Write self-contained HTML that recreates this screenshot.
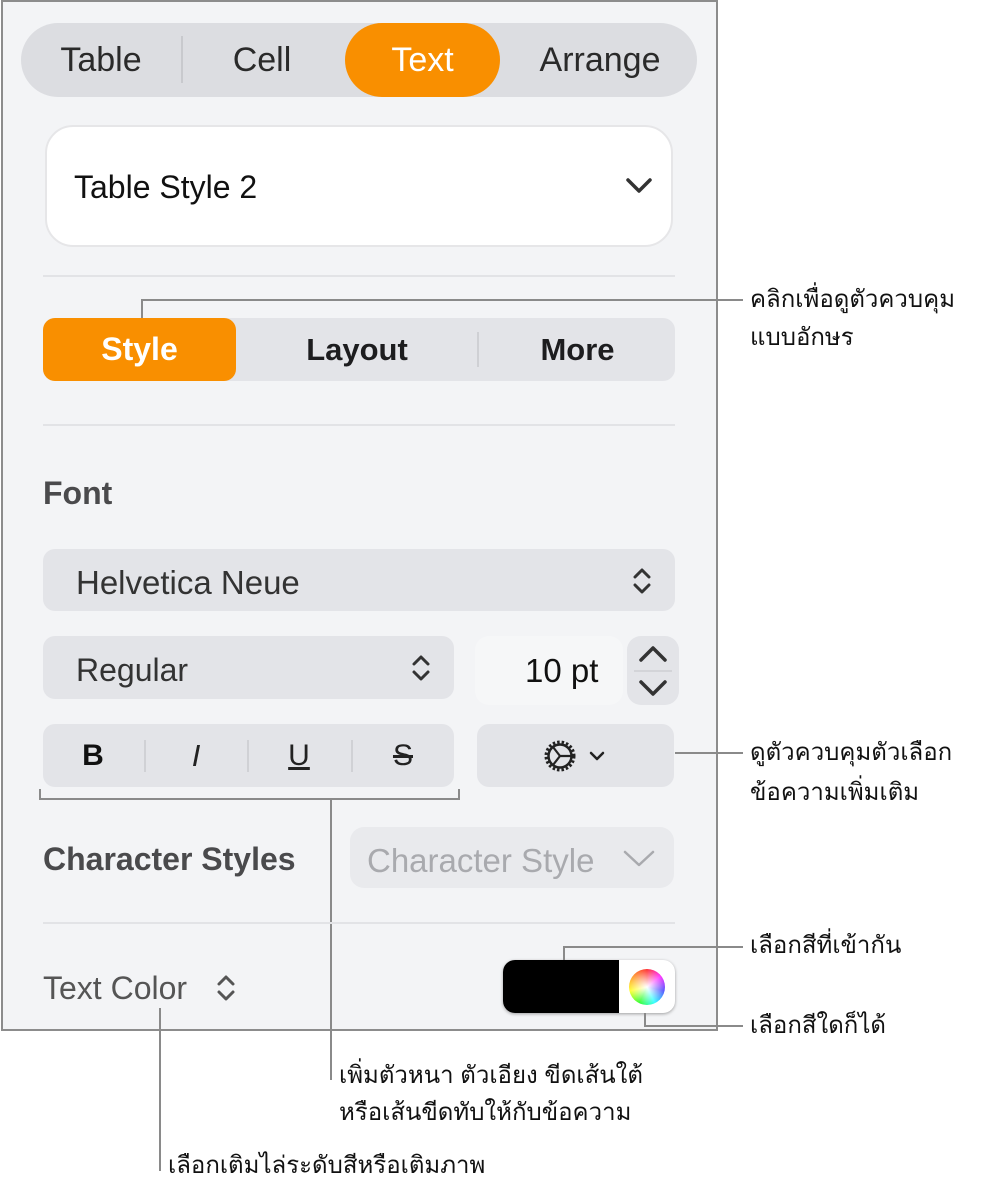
<!DOCTYPE html>
<html><head><meta charset="utf-8"><style>
*{margin:0;padding:0;box-sizing:border-box}
body{width:984px;height:1181px;background:#fff;position:relative;overflow:hidden;font-family:"Liberation Sans","Noto Sans CJK SC",sans-serif;color:#1d1d1f}
.a{position:absolute}
.panel{left:1px;top:0;width:717px;height:1031px;background:#f3f4f6;border:2px solid #8c8c8c}
.ctl{background:#e3e4e8;border-radius:12px}
.ln{background:#8a8a8a;position:absolute}
.th{font-family:"Liberation Sans","Noto Sans CJK SC","WenQuanYi Zen Hei",sans-serif;font-size:24px;color:#111;line-height:38px;white-space:nowrap}
.div{height:2px;background:#e2e3e6}
.c{display:flex;align-items:center;justify-content:center}
.t{line-height:1;white-space:nowrap}
</style></head><body>
<div class="a panel"></div>
<!-- tabs -->
<div class="a" style="left:21px;top:23px;width:676px;height:74px;background:#dcdde1;border-radius:37px"></div>
<div class="a" style="left:181px;top:36px;width:2px;height:47px;background:#c8c9cd"></div>
<div class="a" style="left:345px;top:23px;width:155px;height:74px;background:#f98f00;border-radius:37px"></div>
<div class="a c" style="left:40px;top:23px;width:122px;height:74px;font-size:34px;color:#2a2a2a">Table</div>
<div class="a c" style="left:200px;top:23px;width:124px;height:74px;font-size:34px;color:#2a2a2a">Cell</div>
<div class="a c" style="left:345px;top:23px;width:155px;height:74px;font-size:34px;color:#fff">Text</div>
<div class="a c" style="left:505px;top:23px;width:190px;height:74px;font-size:34px;color:#2a2a2a">Arrange</div>
<!-- table style -->
<div class="a" style="left:45px;top:125px;width:628px;height:122px;background:#fff;border:2px solid #e6e6e8;border-radius:28px"></div>
<div class="a t" style="left:74px;top:171px;font-size:32px;color:#111">Table Style 2</div>
<svg class="a" style="left:624px;top:176px" width="30" height="20"><path d="M4 4 L15 15 L26 4" fill="none" stroke="#333" stroke-width="3.5" stroke-linecap="round" stroke-linejoin="round"/></svg>
<div class="a div" style="left:43px;top:275px;width:632px"></div>
<!-- style segmented -->
<div class="a ctl" style="left:43px;top:318px;width:632px;height:63px"></div>
<div class="a" style="left:43px;top:318px;width:193px;height:63px;background:#f98f00;border-radius:12px"></div>
<div class="a" style="left:477px;top:332px;width:2px;height:35px;background:#cfd0d4"></div>
<div class="a c" style="left:43px;top:318px;width:193px;height:63px;font-size:32px;font-weight:bold;color:#fff">Style</div>
<div class="a c" style="left:257px;top:318px;width:200px;height:63px;font-size:31px;font-weight:bold;color:#1d1d1f">Layout</div>
<div class="a c" style="left:480px;top:318px;width:195px;height:63px;font-size:31px;font-weight:bold;color:#1d1d1f">More</div>
<div class="a div" style="left:43px;top:424px;width:632px"></div>
<div class="a t" style="left:43px;top:477px;font-size:32px;font-weight:bold;color:#4a4a4c">Font</div>
<!-- font popup -->
<div class="a ctl" style="left:43px;top:549px;width:632px;height:62px"></div>
<div class="a t" style="left:76px;top:566px;font-size:33px;color:#333">Helvetica Neue</div>
<svg class="a" style="left:630px;top:566px" width="24" height="30"><path d="M5 11 L12 4 L19 11 M5 19 L12 26 L19 19" fill="none" stroke="#333" stroke-width="3" stroke-linecap="round" stroke-linejoin="round"/></svg>
<!-- regular -->
<div class="a ctl" style="left:43px;top:636px;width:411px;height:63px"></div>
<div class="a t" style="left:76px;top:654px;font-size:32px;color:#333">Regular</div>
<svg class="a" style="left:409px;top:653px" width="24" height="30"><path d="M5 11 L12 4 L19 11 M5 19 L12 26 L19 19" fill="none" stroke="#333" stroke-width="3" stroke-linecap="round" stroke-linejoin="round"/></svg>
<div class="a" style="left:475px;top:636px;width:148px;height:69px;background:#f6f7f8;border-radius:14px"></div>
<div class="a t" style="left:525px;top:654px;font-size:33px;color:#111">10 pt</div>
<div class="a ctl" style="left:627px;top:636px;width:52px;height:69px;border-radius:14px"></div>
<div class="a" style="left:634px;top:670px;width:38px;height:2px;background:#d3d4d8"></div>
<svg class="a" style="left:634px;top:640px" width="38" height="62"><path d="M7 20 L19 8 L31 20 M7 42 L19 54 L31 42" fill="none" stroke="#333" stroke-width="3.5" stroke-linecap="round" stroke-linejoin="round"/></svg>
<!-- BIUS -->
<div class="a ctl" style="left:43px;top:724px;width:411px;height:63px"></div>
<div class="a" style="left:144px;top:740px;width:2px;height:32px;background:#d0d1d5"></div>
<div class="a" style="left:247px;top:740px;width:2px;height:32px;background:#d0d1d5"></div>
<div class="a" style="left:351px;top:740px;width:2px;height:32px;background:#d0d1d5"></div>
<div class="a c" style="left:43px;top:724px;width:100px;height:63px;font-size:30px;font-weight:bold;color:#111">B</div>
<div class="a c" style="left:146px;top:724px;width:100px;height:63px;font-size:31px;font-style:italic;font-family:'Liberation Sans',sans-serif;color:#222">I</div>
<div class="a c" style="left:249px;top:724px;width:100px;height:63px;font-size:30px;text-decoration:underline;color:#222">U</div>
<div class="a c" style="left:353px;top:724px;width:100px;height:63px;font-size:30px;text-decoration:line-through;color:#222">S</div>
<!-- gear -->
<div class="a ctl" style="left:477px;top:724px;width:197px;height:63px"></div>
<svg class="a" style="left:540px;top:735px" width="70" height="42"><circle cx="20" cy="21" r="14" fill="none" stroke="#222" stroke-width="3" stroke-dasharray="2.5 2"/><circle cx="20" cy="21" r="11.5" fill="none" stroke="#222" stroke-width="2.5"/><path d="M20 21 L31 21 M20 21 L13 12 M20 21 L13 30" stroke="#222" stroke-width="2.2"/><path d="M51 18 L57 24 L63 18" fill="none" stroke="#222" stroke-width="2.5" stroke-linecap="round" stroke-linejoin="round"/></svg>
<!-- bracket -->
<div class="ln" style="left:39px;top:789px;width:2px;height:11px"></div>
<div class="ln" style="left:458px;top:789px;width:2px;height:11px"></div>
<div class="ln" style="left:39px;top:798px;width:421px;height:2px"></div>
<div class="ln" style="left:330px;top:798px;width:2px;height:282px"></div>
<!-- char styles -->
<div class="a t" style="left:43px;top:843px;font-size:32px;font-weight:bold;color:#4a4a4c">Character Styles</div>
<div class="a" style="left:350px;top:827px;width:324px;height:61px;background:#e9eaed;border-radius:14px"></div>
<div class="a t" style="left:367px;top:844px;font-size:33px;color:#a9aaae">Character Style</div>
<svg class="a" style="left:622px;top:848px" width="36" height="20"><path d="M3 4 L17 17 L31 4" fill="none" stroke="#a9aaae" stroke-width="2.5" stroke-linecap="round" stroke-linejoin="round"/></svg>
<div class="a div" style="left:43px;top:922px;width:632px"></div>
<!-- text color -->
<div class="a t" style="left:43px;top:972px;font-size:32px;color:#555">Text Color</div>
<svg class="a" style="left:214px;top:973px" width="24" height="30"><path d="M5 11 L12 4 L19 11 M5 19 L12 26 L19 19" fill="none" stroke="#555" stroke-width="3" stroke-linecap="round" stroke-linejoin="round"/></svg>
<div class="ln" style="left:159px;top:1008px;width:2px;height:163px"></div>
<div class="a" style="left:503px;top:960px;width:172px;height:53px;background:#fff;border-radius:12px;box-shadow:0 1px 3px rgba(0,0,0,.35)"></div>
<div class="a" style="left:503px;top:960px;width:116px;height:53px;background:#000;border-radius:12px 0 0 12px"></div>
<div class="a" style="left:629px;top:969px;width:36px;height:36px;border-radius:50%;background:radial-gradient(circle,#fff 0%,rgba(255,255,255,0) 70%),conic-gradient(#f33,#f3f,#55f,#3ff,#3f3,#ff3,#f93,#f33)"></div>
<!-- callouts -->
<div class="ln" style="left:141px;top:299px;width:602px;height:2px"></div>
<div class="ln" style="left:141px;top:299px;width:2px;height:19px"></div>
<div class="ln" style="left:675px;top:752px;width:68px;height:2px"></div>
<div class="ln" style="left:563px;top:946px;width:2px;height:14px"></div>
<div class="ln" style="left:563px;top:946px;width:180px;height:2px"></div>
<div class="ln" style="left:644px;top:1013px;width:2px;height:14px"></div>
<div class="ln" style="left:644px;top:1025px;width:99px;height:2px"></div>
<div class="a th" style="left:750px;top:281px">คลิกเพื่อดูตัวควบคุม</div>
<div class="a th" style="left:750px;top:319px">แบบอักษร</div>
<div class="a th" style="left:750px;top:734px">ดูตัวควบคุมตัวเลือก</div>
<div class="a th" style="left:750px;top:774px">ข้อความเพิ่มเติม</div>
<div class="a th" style="left:750px;top:927px">เลือกสีที่เข้ากัน</div>
<div class="a th" style="left:750px;top:1007px">เลือกสีใดก็ได้</div>
<div class="a th" style="left:339px;top:1057px">เพิ่มตัวหนา ตัวเอียง ขีดเส้นใต้</div>
<div class="a th" style="left:339px;top:1094px">หรือเส้นขีดทับให้กับข้อความ</div>
<div class="a th" style="left:168px;top:1147px">เลือกเติมไล่ระดับสีหรือเติมภาพ</div>
</body></html>
